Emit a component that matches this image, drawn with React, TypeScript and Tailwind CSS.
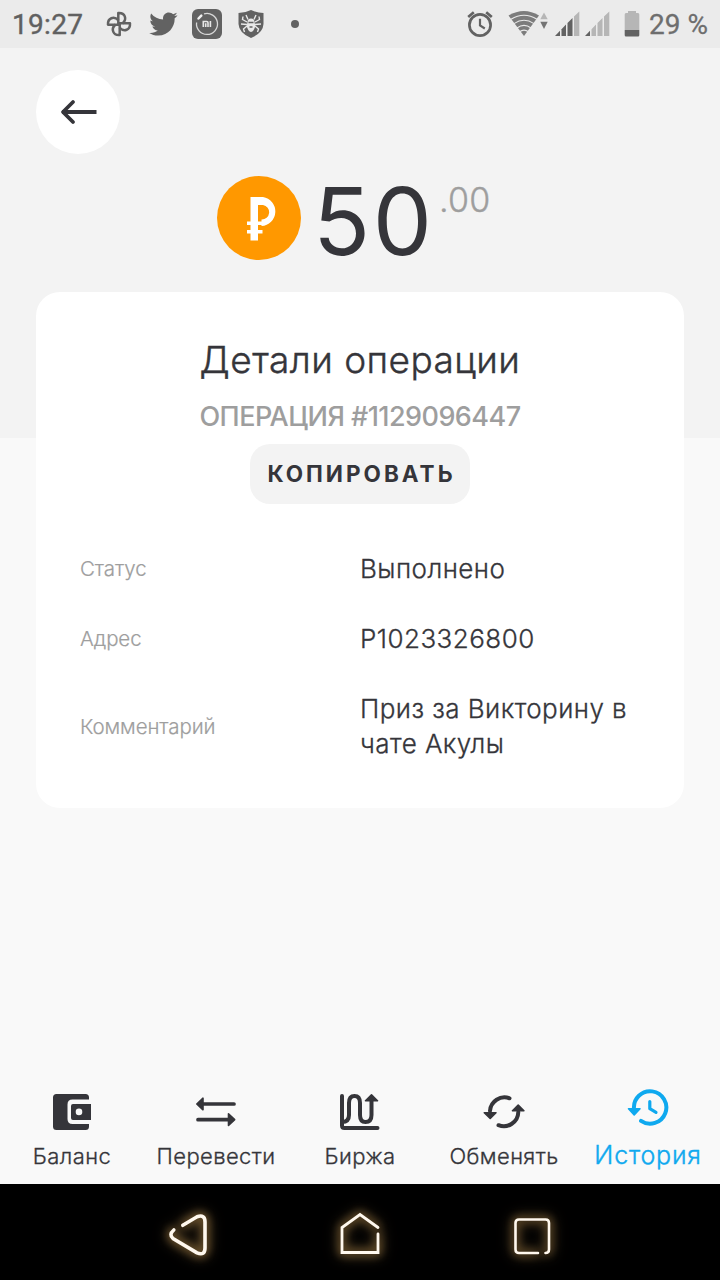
import React from "react";

function StatusBar() {
  return (
    <header className="flex h-12 items-center bg-[#ebebeb] font-['Roboto',sans-serif] text-[28px] leading-none text-[#606060]">
      <span className="ml-3 mt-[2px] w-[73px] whitespace-nowrap font-normal tracking-[0.3px] [-webkit-text-stroke:0.4px_#606060]">19:27</span>
      <svg className="ml-[20px]" width="28" height="28" viewBox="0 0 28 28" fill="none" stroke="#626262" strokeWidth="2.500" strokeLinejoin="round">
        {[0, 90, 180, 270].map((angle) => (
          <path key={angle} d="M13.300 14V3C20 2.500 22.500 9 17.500 13.500" transform={`rotate(${angle} 14 14)`} />
        ))}
      </svg>
      <svg className="ml-[15px]" width="30" height="30" viewBox="0 0 24 24" fill="#626262">
        <path d="M23.643 4.937c-.835.37-1.732.62-2.675.733.962-.576 1.7-1.49 2.048-2.578-.9.534-1.897.922-2.958 1.13-.85-.904-2.06-1.47-3.4-1.47-2.572 0-4.658 2.086-4.658 4.66 0 .364.042.718.12 1.06-3.873-.195-7.304-2.05-9.602-4.868-.4.69-.63 1.49-.63 2.342 0 1.616.823 3.043 2.072 3.878-.764-.025-1.482-.234-2.11-.583v.06c0 2.257 1.605 4.14 3.737 4.568-.392.106-.803.162-1.227.162-.3 0-.593-.028-.877-.082.593 1.85 2.313 3.198 4.352 3.234-1.595 1.25-3.604 1.995-5.786 1.995-.376 0-.747-.022-1.112-.065 2.062 1.323 4.51 2.093 7.14 2.093 8.57 0 13.255-7.098 13.255-13.254 0-.2-.005-.402-.014-.602.91-.658 1.7-1.477 2.323-2.41z" />
      </svg>
      <svg className="ml-[13px]" width="32" height="32" viewBox="0 0 32 32" fill="none">
        <rect x="1" y="1" width="30" height="30" rx="6" fill="#626262" />
        <path d="M13 5.900A10.500 10.500 0 1 1 5.600 14.500" stroke="#d8d8d8" strokeWidth="1.300" />
        <path d="M7.500 10.500L10.300 7.600" stroke="#f1f1f1" strokeWidth="2.500" strokeLinecap="round" />
        <path d="M12.300 19V13.500H15.800Q17 13.500 17 14.700V19M14.700 15.200V19M19.400 13V19" stroke="#e7e7e7" strokeWidth="1.600" />
      </svg>
      <svg className="ml-[14px]" width="28" height="30" viewBox="0 0 28 30" fill="none">
        <path d="M14 1Q20 4 26.500 4V15Q26 24 14 29Q2 24 1.500 15V4Q8 4 14 1Z" fill="#626262" />
        <path d="M14 9.500Q17.500 9.500 17.500 13L18.300 17Q17 22.500 14 23Q11 22.500 9.700 17L10.500 13Q10.500 9.500 14 9.500Z" fill="#e9e9e9" />
        <path d="M10 13L5.500 10.500L6 7.500M10 15.500L4 15M10 17L6.500 20L7.500 23M11 10.500L9 6M18 13L22.500 10.500L22 7.500M18 15.500L24 15M18 17L21.500 20L20.500 23M17 10.500L19 6" stroke="#e9e9e9" strokeWidth="1.400" />
        <path d="M11.500 13.500H16.500M12.500 18H15.500" stroke="#626262" strokeWidth="1.500" />
      </svg>
      <span className="ml-[26px] size-2 rounded-full bg-[#626262]" />
      <svg className="ml-auto" width="28" height="28" viewBox="0 0 28 28" fill="none" stroke="#626262" strokeWidth="2.700">
        <circle cx="14" cy="15" r="10.600" />
        <path d="M2.200 7L7.800 2.200M25.800 7L20.200 2.200" />
        <path d="M14 8.800V15.500L18.800 18.500" strokeWidth="2.200" />
      </svg>
      <svg className="ml-[13px]" width="42" height="28" viewBox="0 0 42 28" fill="none">
        <path d="M1.500 5.500Q17 -3.500 32 5.500L17 26Z" fill="#7c7c7c" />
        <path d="M4 9.300Q17 1.200 30 9.300M7 13.600Q17 7 27 13.600M10 18Q17 12.800 24 18M12.500 21.800Q17 18.500 21.500 21.800" stroke="#ebebeb" strokeWidth="1.100" />
        <path d="M37 2.500L40.700 9.300H33.300Z" fill="#b6b6b6" />
        <path d="M33.300 11.800H40.700L37 19Z" fill="#747474" />
      </svg>
      <svg className="ml-[6px]" width="56" height="26" viewBox="0 0 56 26">
        <path d="M0 25L5 19.800V25Z" fill="#626262" />
        <path d="M6.500 25V18.200L11 13.500V25Z" fill="#626262" />
        <path d="M12.500 25V12L17.500 7V25Z" fill="#626262" />
        <path d="M19 25V5.500L24.300 .5V25Z" fill="#b6b6b6" />
        <path d="M30 25L35 19.800V25Z" fill="#626262" />
        <path d="M36.500 25V18.200L41 13.500V25ZM42.500 25V12L47.500 7V25ZM49 25V5.500L54.300 .5V25Z" fill="#b6b6b6" />
      </svg>
      <svg className="ml-[13px]" width="16" height="28" viewBox="0 0 16 28">
        <path d="M4 1H12V3H14Q15.300 3 15.300 4.500V20H.7V4.500Q.7 3 2 3H4Z" fill="#b6b6b6" />
        <path d="M.7 20H15.300V25Q15.300 26.500 14 26.500H2Q.7 26.500 .7 25Z" fill="#626262" />
      </svg>
      <span className="ml-[9px] mr-3 mt-[2px] w-[59px] whitespace-nowrap font-normal text-[#6e6e6e] [-webkit-text-stroke:0.3px_#6e6e6e]">29 %</span>
    </header>
  );
}

function Amount() {
  return (
    <div className="mt-[22px] flex h-[84px] pl-[216.5px]">
      <svg width="84" height="84" viewBox="0 0 84 84" fill="none">
        <circle cx="42" cy="42" r="42" fill="#ff9800" />
        <path d="M33.500 21H46A14.600 14.600 0 0 1 44.500 50V43.500A7.300 7.300 0 0 0 46 29H41V45.500H45.500V49H41V54H45.500V57.500H41V64.500H33.500V57.500H30V54H33.500V49H30V45.500H33.500Z" fill="#fff" />
      </svg>
      <span className="ml-[12.5px] mt-[-1px] w-[122px] whitespace-nowrap text-[94px] font-normal leading-[92px] tracking-[2.5px]">50</span>
      <span className="ml-[4px] mt-[7px] text-[34px] font-light leading-[34px] tracking-[0.2px] text-[#9e9e9e] [-webkit-text-stroke:0.4px_#9e9e9e]">.00</span>
    </div>
  );
}

const details = [
  { label: "Статус", value: "Выполнено" },
  { label: "Адрес", value: "P1023326800" },
  { label: "Комментарий", value: "Приз за Викторину в чате Акулы" },
];

function DetailsCard() {
  return (
    <main className="mx-9 mt-8 flex h-[516px] flex-col items-center rounded-3xl bg-white pt-[45px]">
      <h1 className="whitespace-nowrap text-[37px] font-light leading-[46px] tracking-[0.45px] [-webkit-text-stroke:0.4px_#35353a]">Детали операции</h1>
      <p className="mt-[16px] whitespace-nowrap text-[27px] font-medium leading-[36px] tracking-[-0.55px] text-[#9e9e9e]">ОПЕРАЦИЯ #1129096447</p>
      <button className="mt-[9px] flex h-[60px] w-[220px] items-center justify-center rounded-[20px] bg-[#f3f3f3] pb-[1px] pl-[3px] text-[22.5px] font-bold tracking-[3px]">КОПИРОВАТЬ</button>
      <dl className="mt-[29px] w-full">
        {details.map(({ label, value }) => (
          <div key={label} className="grid min-h-[70px] grid-cols-[280px_290px] items-center py-[17.5px] pl-11">
            <dt className="mt-[2px] text-[20.5px] font-light leading-[30px] tracking-[-0.1px] text-[#9e9e9e] [-webkit-text-stroke:0.2px_#9e9e9e]">{label}</dt>
            <dd className="text-[26px] font-light leading-[35px] tracking-[0.45px] [-webkit-text-stroke:0.3px_#35353a]">{value}</dd>
          </div>
        ))}
      </dl>
    </main>
  );
}

const line = { fill: "none", stroke: "currentColor", strokeWidth: 4, strokeLinecap: "round", strokeLinejoin: "round" } as const;

const tabs = [
  {
    label: "Баланс",
    icon: (
      <svg width="44" height="44" viewBox="0 0 44 44" fill="currentColor">
        <path d="M6.500 4H35.500Q39 4 39 7.500V9.500H22.500Q17.500 9.500 17.500 14.500V29Q17.500 34 22.500 34H39V36.500Q39 40 35.500 40H6.500Q3 40 3 36.500V7.500Q3 4 6.500 4Z" />
        <path fillRule="evenodd" d="M23 14H41V30H23Q21 30 21 28V16Q21 14 23 14ZM29 18.600A3.300 3.300 0 1 0 29 25.200A3.300 3.300 0 1 0 29 18.600Z" />
      </svg>
    ),
  },
  {
    label: "Перевести",
    icon: (
      <svg width="44" height="44" viewBox="0 0 44 44" {...line}>
        <path d="M6 14H40M4 29.700H38" strokeWidth="3.700" />
        <path d="M2.800 14L9 8.200V19.800ZM40.700 29.700L34.500 23.900V35.500Z" fill="currentColor" strokeWidth="1.600" />
      </svg>
    ),
  },
  {
    label: "Биржа",
    icon: (
      <svg width="44" height="44" viewBox="0 0 44 44" {...line}>
        <path d="M4 6V35.500Q4 38 6.500 38H39.500" />
        <path d="M4 32Q11 32 11 25V13Q11 6 16.500 6Q22 6 22 13V25Q22 32 27.500 32Q33.500 32 33.500 25V10" />
        <path d="M33.500 4.800L39.500 10.800H27.500Z" fill="currentColor" strokeWidth="1.600" />
      </svg>
    ),
  },
  {
    label: "Обменять",
    icon: (
      <svg width="44" height="44" viewBox="0 0 44 44" {...line}>
        <path d="M27.500 8.300A14.500 14.500 0 0 0 8 21" />
        <path d="M16.500 35.200A14.500 14.500 0 0 0 36.300 22" />
        <path d="M2.300 22.700H14L8.200 28.500ZM30.500 20.800H41.900L36.200 15Z" fill="currentColor" strokeWidth="1.600" />
      </svg>
    ),
  },
  {
    label: "История",
    active: true,
    icon: (
      <svg width="44" height="44" viewBox="0 0 44 44" {...line}>
        <path d="M8 23A16.200 16.200 0 1 1 15 34.800" />
        <path d="M23.800 15.600V22.700L30 26.400" strokeWidth="3.200" />
        <path d="M2.500 22.800H14L8.200 28.900Z" fill="currentColor" strokeWidth="1.600" />
      </svg>
    ),
  },
];

function TabBar() {
  return (
    <nav className="mt-auto flex h-[104px]">
      {tabs.map(({ label, icon, active }) => (
        <a key={label} className={active ? "flex w-36 flex-col items-center pt-[6px] text-[#0fa9ef]" : "flex w-36 flex-col items-center pt-[10px]"}>
          {icon}
          <span className={active ? "mt-[10px] text-[25px] font-light leading-[30px] tracking-[0.8px] [-webkit-text-stroke:0.4px_#0fa9ef]" : "mt-[7px] text-[22px] font-light leading-[30px] tracking-[0.4px] [-webkit-text-stroke:0.3px_#35353a]"}>{label}</span>
        </a>
      ))}
    </nav>
  );
}

const glow = "[filter:drop-shadow(0_0_4px_#8a6a3a)_drop-shadow(0_0_6px_#8a6a3a)]";

function SystemBar() {
  return (
    <footer className="flex h-24 items-center bg-black pl-[164px] pt-[7px]">
      <svg className={glow} width="48" height="48" viewBox="0 0 48 48" fill="none" stroke="#fff8ee" strokeWidth="3.600" strokeLinecap="round">
        <path d="M18.800 13.300L33 4.800Q41 2 41 10V36Q41 44 33 40.800L9 26.500Q4.500 22.500 9.800 18" />
      </svg>
      <svg className={`ml-[124px] ${glow}`} width="48" height="48" viewBox="0 0 48 48" fill="none" stroke="#fff8ee" strokeWidth="2.800" strokeLinecap="round">
        <path d="M42 15.500L24 2.500L6 15.500V40.500H42V22" />
      </svg>
      <svg className={`ml-[124px] ${glow}`} width="48" height="48" viewBox="0 0 48 48" fill="none" stroke="#fff8ee" strokeWidth="2.600" strokeLinecap="round">
        <path d="M30 41H11Q7.500 41 7.500 37.500V11Q7.500 7.500 11 7.500H37.500Q41 7.500 41 11V37.500Q41 41 37.500 41" />
      </svg>
    </footer>
  );
}

export default function App() {
  return (
    <div className="flex h-[1280px] w-[720px] flex-col overflow-hidden bg-[linear-gradient(#f3f3f3_438px,#f9f9f9_438px)] font-['Inter',sans-serif] text-[#35353a]">
      <StatusBar />
      <button aria-label="Назад" className="ml-9 mt-[22px] flex size-[84px] shrink-0 items-center justify-center rounded-full bg-white">
        <svg width="38" height="28" viewBox="0 0 38 28" fill="none" stroke="currentColor" strokeWidth="3.800">
          <path d="M3 14H37.500" />
          <path d="M14 4L4 14L14 24" strokeLinecap="round" strokeLinejoin="round" />
        </svg>
      </button>
      <Amount />
      <DetailsCard />
      <TabBar />
      <SystemBar />
    </div>
  );
}
